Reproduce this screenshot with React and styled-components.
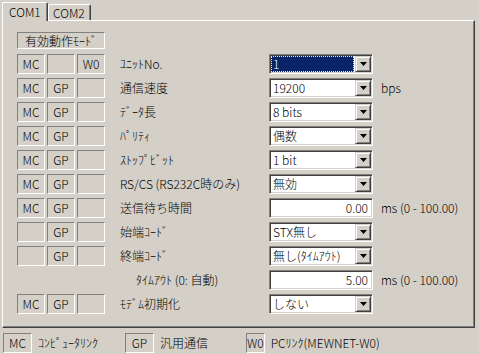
import styled, { createGlobalStyle } from 'styled-components';

const GlobalStyle = createGlobalStyle`
  body {
    margin: 0;
    background: #d4d0c8;
    font-family: "Noto Sans CJK JP", "Liberation Sans", sans-serif;
    font-size: 12px;
    font-weight: 300;
    color: #000;
  }
`;

const rows = [
  { cells: ['MC', '', 'W0'], label: 'ﾕﾆｯﾄNo.', kind: 'combo', value: '1', selected: true },
  { cells: ['MC', 'GP', ''], label: '通信速度', kind: 'combo', value: '19200', unit: 'bps' },
  { cells: ['MC', 'GP', ''], label: 'ﾃﾞｰﾀ長', kind: 'combo', value: '8 bits' },
  { cells: ['MC', 'GP', ''], label: 'ﾊﾟﾘﾃｨ', kind: 'combo', value: '偶数' },
  { cells: ['MC', 'GP', ''], label: 'ｽﾄｯﾌﾟﾋﾞｯﾄ', kind: 'combo', value: '1 bit' },
  { cells: ['MC', 'GP', ''], label: 'RS/CS (RS232C時のみ)', kind: 'combo', value: '無効' },
  { cells: ['MC', 'GP', ''], label: '送信待ち時間', kind: 'edit', value: '0.00', unit: 'ms (0 - 100.00)' },
  { cells: ['', 'GP', ''], label: '始端ｺｰﾄﾞ', kind: 'combo', value: 'STX無し' },
  { cells: ['', 'GP', ''], label: '終端ｺｰﾄﾞ', kind: 'combo', value: '無し(ﾀｲﾑｱｳﾄ)' },
  { cells: null, label: 'ﾀｲﾑｱｳﾄ (0: 自動)', indent: true, kind: 'edit', value: '5.00', unit: 'ms (0 - 100.00)' },
  { cells: ['MC', 'GP', ''], label: 'ﾓﾃﾞﾑ初期化', kind: 'combo', value: 'しない' },
];

const legend = [
  { code: 'MC', text: 'ｺﾝﾋﾟｭｰﾀﾘﾝｸ' },
  { code: 'GP', text: '汎用通信' },
  { code: 'W0', text: 'PCﾘﾝｸ(MEWNET-W0)' },
];

function Arrow() {
  return (
    <svg width="7" height="4" viewBox="0 0 7 4">
      <polygon points="0,0 7,0 3.5,4" fill="#000" />
    </svg>
  );
}

function Combo({ value, selected }) {
  return (
    <Sunken>
      <ComboValue $selected={selected}>{value}</ComboValue>
      <DropButton>
        <Arrow />
      </DropButton>
    </Sunken>
  );
}

function App() {
  return (
    <Window>
      <GlobalStyle />
      <TabStrip>
        <Tab $active>COM1</Tab>
        <Tab>COM2</Tab>
      </TabStrip>
      <Panel>
        <ModeBox>有効動作ﾓｰﾄﾞ</ModeBox>
        <Rows>
          {rows.map((r, i) => (
            <Row key={i}>
              <CellGroup>
                {r.cells && r.cells.map((c, j) => <Cell key={j}>{c}</Cell>)}
              </CellGroup>
              <Label $indent={r.indent}>{r.label}</Label>
              {r.kind === 'combo' ? (
                <Combo value={r.value} selected={r.selected} />
              ) : (
                <Sunken>
                  <EditValue>{r.value}</EditValue>
                </Sunken>
              )}
              {r.unit && <Unit>{r.unit}</Unit>}
            </Row>
          ))}
        </Rows>
      </Panel>
      <Legend>
        {legend.map((l) => (
          <LegendItem key={l.code}>
            <LegendBox>{l.code}</LegendBox>
            <LegendText>{l.text}</LegendText>
          </LegendItem>
        ))}
      </Legend>
    </Window>
  );
}

const Window = styled.div`
  width: 479px;
  height: 354px;
  box-sizing: border-box;
  padding: 2px 4px 0 2px;
  background: #d4d0c8;
  overflow: hidden;
  line-height: 16px;
`;

const TabStrip = styled.div`
  display: flex;
  align-items: flex-end;
  height: 18px;
  position: relative;
  z-index: 1;
`;

const Tab = styled.div`
  box-sizing: border-box;
  width: ${(p) => (p.$active ? '46px' : '43px')};
  height: ${(p) => (p.$active ? '19px' : '16px')};
  margin-bottom: ${(p) => (p.$active ? '-1px' : '0')};
  padding-left: ${(p) => (p.$active ? '6px' : '4px')};
  padding-top: ${(p) => (p.$active ? '1px' : '0')};
  line-height: 15px;
  background: #d4d0c8;
  border-left: 1px solid #fff;
  border-top: 1px solid #fff;
  border-right: 1px solid #404040;
  border-radius: 2px 2px 0 0;
  box-shadow: inset -1px 0 #808080;
`;

const Panel = styled.div`
  box-sizing: border-box;
  width: 473px;
  height: 308px;
  padding: 11px 0 0 14px;
  border-top: 1px solid #fff;
  border-left: 1px solid #fff;
  border-right: 1px solid #404040;
  border-bottom: 1px solid #404040;
  box-shadow: inset -1px -1px #808080;
`;

const staticEdge = `
  box-sizing: border-box;
  border: 1px solid;
  border-color: #808080 #fff #fff #808080;
`;

const ModeBox = styled.div`
  ${staticEdge}
  width: 88px;
  height: 17px;
  line-height: 15px;
  text-align: center;
  margin-bottom: 5px;
`;

const Rows = styled.div`
  display: flex;
  flex-direction: column;
  gap: 4px;
`;

const Row = styled.div`
  display: flex;
  align-items: center;
  height: 20px;
`;

const CellGroup = styled.div`
  display: flex;
  gap: 2px;
  width: 88px;
  margin-right: 15px;
`;

const Cell = styled.div`
  ${staticEdge}
  width: 28px;
  height: 20px;
  line-height: 18px;
  text-align: center;
`;

const Label = styled.div`
  width: 149px;
  box-sizing: border-box;
  padding-left: ${(p) => (p.$indent ? '16px' : '0')};
  line-height: 20px;
  white-space: nowrap;
`;

const Sunken = styled.div`
  box-sizing: border-box;
  display: flex;
  width: 104px;
  height: 20px;
  padding: 1px;
  background: #fff;
  border: 1px solid;
  border-color: #808080 #fff #fff #808080;
  box-shadow: inset 1px 1px #404040, inset -1px -1px #d4d0c8;
`;

const ComboValue = styled.div`
  flex: 1;
  box-sizing: border-box;
  margin-right: 1px;
  padding-left: 1px;
  line-height: 14px;
  white-space: nowrap;
  overflow: hidden;
  background: ${(p) => (p.$selected ? '#0a246a' : '#fff')};
  color: ${(p) => (p.$selected ? '#fff' : '#000')};
  border: 1px ${(p) => (p.$selected ? 'dotted #f2eeb0' : 'solid transparent')};
`;

const DropButton = styled.div`
  box-sizing: border-box;
  width: 16px;
  height: 16px;
  display: flex;
  align-items: center;
  justify-content: center;
  background: #d4d0c8;
  border: 1px solid;
  border-color: #d4d0c8 #404040 #404040 #d4d0c8;
  box-shadow: inset 1px 1px #fff, inset -1px -1px #808080;
`;

const EditValue = styled.div`
  flex: 1;
  text-align: right;
  padding-right: 3px;
  line-height: 16px;
`;

const Unit = styled.div`
  margin-left: 8px;
  white-space: nowrap;
`;

const Legend = styled.div`
  display: flex;
  height: 20px;
  margin: 5px 0 0 1px;
`;

const LegendItem = styled.div`
  display: flex;
  align-items: center;
  gap: 6px;
  flex: none;
  width: 122px;
  white-space: nowrap;
  &:nth-child(2) {
    width: 121px;
  }
`;

const LegendBox = styled.div`
  ${staticEdge}
  width: 29px;
  height: 20px;
  line-height: 18px;
  text-align: center;
`;

const LegendText = styled.span`
  line-height: 20px;
`;

export default App;
